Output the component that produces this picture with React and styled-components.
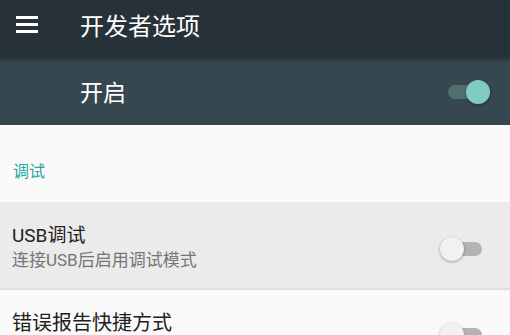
import styled, { createGlobalStyle } from 'styled-components';

const GlobalStyle = createGlobalStyle`
  html, body {
    margin: 0;
    padding: 0;
    background: #fafafa;
    font-family: Roboto, "Noto Sans CJK SC", "Noto Sans", sans-serif;
    overflow: hidden;
  }
`;

const Page = styled.div`
  width: 510px;
  height: 335px;
  display: flex;
  flex-direction: column;
  background: #fafafa;
  overflow: hidden;
`;

const Toolbar = styled.div`
  height: 58px;
  flex: none;
  display: flex;
  align-items: center;
  background: #263238;
  box-shadow: 0 2px 3px rgba(0, 0, 0, 0.25);
  position: relative;
  z-index: 1;
`;

const MenuButton = styled.div`
  width: 80px;
  height: 58px;
  display: flex;
  flex-direction: column;
  justify-content: center;
  gap: 4px;
  padding-left: 16px;
  padding-bottom: 10px;
  box-sizing: border-box;
  span {
    display: block;
    width: 22px;
    height: 3px;
    background: #fff;
  }
`;

const Title = styled.h1`
  margin: -10px 0 0;
  color: #fff;
  font-size: 24px;
  font-weight: 400;
`;

const MasterBar = styled.div`
  height: 67px;
  flex: none;
  display: flex;
  align-items: center;
  justify-content: space-between;
  background: #37474f;
  padding: 0 24px 0 80px;
`;

const MasterLabel = styled.span`
  color: #fff;
  font-size: 23px;
  margin-top: -2px;
`;

const SectionHeader = styled.div`
  height: 77px;
  flex: none;
  display: flex;
  align-items: flex-end;
  padding: 0 0 20px 13px;
  box-sizing: border-box;
  color: #26a69a;
  font-size: 16px;
`;

const Row = styled.div`
  height: 88px;
  flex: none;
  display: flex;
  align-items: flex-start;
  justify-content: space-between;
  padding: ${(p) => p.$top || 22}px 28px 0 12px;
  box-sizing: border-box;
  background: ${(p) => (p.$active ? '#ebebeb' : '#fafafa')};
  border-bottom: 2px solid #e0e0e0;
`;

const RowText = styled.div`
  display: flex;
  flex-direction: column;
  gap: 1px;
`;

const RowTitle = styled.span`
  color: #212121;
  font-size: ${(p) => p.$size || 19}px;
  line-height: ${(p) => (p.$size ? 20 : 24)}px;
`;

const RowSummary = styled.span`
  color: #757575;
  font-size: 17px;
  line-height: 23px;
`;

const Switch = styled.div`
  position: relative;
  width: 38px;
  height: 24px;
  flex: none;
  margin-top: ${(p) => (p.$on ? '0' : `${p.$offset ?? 13}px`)};
  &::before {
    content: '';
    position: absolute;
    left: 0;
    right: 0;
    top: 5px;
    height: 14px;
    border-radius: 7px;
    background: ${(p) => (p.$on ? '#4f6f6f' : '#b3b3b3')};
  }
  &::after {
    content: '';
    position: absolute;
    top: 0;
    ${(p) => (p.$on ? 'right: -4px;' : 'left: -4px;')}
    width: 24px;
    height: 24px;
    border-radius: 50%;
    background: ${(p) => (p.$on ? '#80cbc4' : '#f1f1f1')};
    box-shadow: 0 1px 3px rgba(0, 0, 0, 0.35);
  }
`;

export default function App() {
  return (
    <Page>
      <GlobalStyle />
      <Toolbar>
        <MenuButton>
          <span />
          <span />
          <span />
        </MenuButton>
        <Title>开发者选项</Title>
      </Toolbar>
      <MasterBar>
        <MasterLabel>开启</MasterLabel>
        <Switch $on />
      </MasterBar>
      <SectionHeader>调试</SectionHeader>
      <Row $active>
        <RowText>
          <RowTitle>USB调试</RowTitle>
          <RowSummary>连接USB后启用调试模式</RowSummary>
        </RowText>
        <Switch />
      </Row>
      <Row $top={23}>
        <RowText>
          <RowTitle $size={20}>错误报告快捷方式</RowTitle>
        </RowText>
        <Switch $offset={10} />
      </Row>
    </Page>
  );
}
